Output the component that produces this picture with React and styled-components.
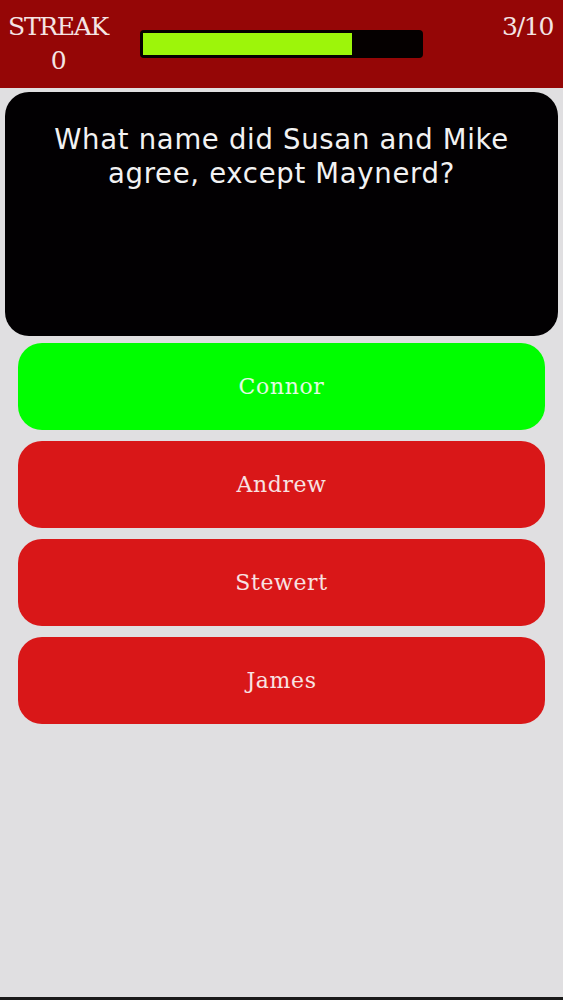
import styled, { createGlobalStyle } from 'styled-components'

const GlobalStyle = createGlobalStyle`
  html, body {
    margin: 0;
    padding: 0;
    background: #e0dfe1;
  }
  #root {
    min-height: 1000px;
  }
`

const answers = [
  { label: 'Connor', correct: true },
  { label: 'Andrew', correct: false },
  { label: 'Stewert', correct: false },
  { label: 'James', correct: false },
]

const App = () => {
  const current = 3
  const total = 10
  const progress = 0.755

  return (
    <>
      <GlobalStyle />
      <Page>
        <TopBar>
          <Streak>
            <span>STREAK</span>
            <span>0</span>
          </Streak>
          <Track>
            <Fill style={{ width: `${progress * 100}%` }} />
          </Track>
          <Count>{current}/{total}</Count>
        </TopBar>

        <Content>
          <QuestionCard>
            What name did Susan and Mike agree, except Maynerd?
          </QuestionCard>
          <Answers>
            {answers.map((a) => (
              <Answer key={a.label} $correct={a.correct}>
                {a.label}
              </Answer>
            ))}
          </Answers>
        </Content>
      </Page>
    </>
  )
}

export default App

const Page = styled.div`
  min-height: 1000px;
  background: #e0dfe1;
  box-sizing: border-box;
  border-bottom: 3px solid #1a1a1a;
`

const TopBar = styled.header`
  height: 88px;
  background: #950606;
  display: flex;
  align-items: flex-start;
  color: #f4e4e4;
  font-family: "DejaVu Serif", "Liberation Serif", serif;
`

const Streak = styled.div`
  width: 116px;
  padding-top: 10px;
  display: flex;
  flex-direction: column;
  align-items: center;
  font-size: 25px;
  line-height: 34px;
  letter-spacing: -1.3px;
`

const Track = styled.div`
  margin-top: 30px;
  margin-left: 24px;
  width: 283px;
  height: 28px;
  box-sizing: border-box;
  padding: 3px;
  background: #050000;
  border-radius: 4px;
  display: flex;
`

const Fill = styled.div`
  height: 100%;
  background: #9df50a;
`

const Count = styled.div`
  margin-left: auto;
  padding: 10px 10px 0 0;
  font-size: 25px;
  line-height: 34px;
  letter-spacing: -1.3px;
`

const Content = styled.main`
  padding: 4px 5px;
  display: flex;
  flex-direction: column;
  gap: 7px;
`

const QuestionCard = styled.section`
  height: 244px;
  box-sizing: border-box;
  padding: 30px 30px 0;
  background: #020002;
  border-radius: 24px;
  color: #f2f2f2;
  text-align: center;
  font-family: "DejaVu Sans", "Liberation Sans", sans-serif;
  font-size: 27.5px;
  line-height: 34px;
  letter-spacing: 0.7px;
`

const Answers = styled.div`
  padding: 0 13px;
  display: flex;
  flex-direction: column;
  gap: 11px;
`

const Answer = styled.button`
  height: 87px;
  border: none;
  border-radius: 24px;
  background: ${(p) => (p.$correct ? '#00fe00' : '#d91718')};
  color: ${(p) => (p.$correct ? '#e4fbe4' : '#f8e2e2')};
  font-family: "DejaVu Serif", "Liberation Serif", serif;
  font-size: 22px;
  letter-spacing: 0.6px;
  cursor: pointer;
`
